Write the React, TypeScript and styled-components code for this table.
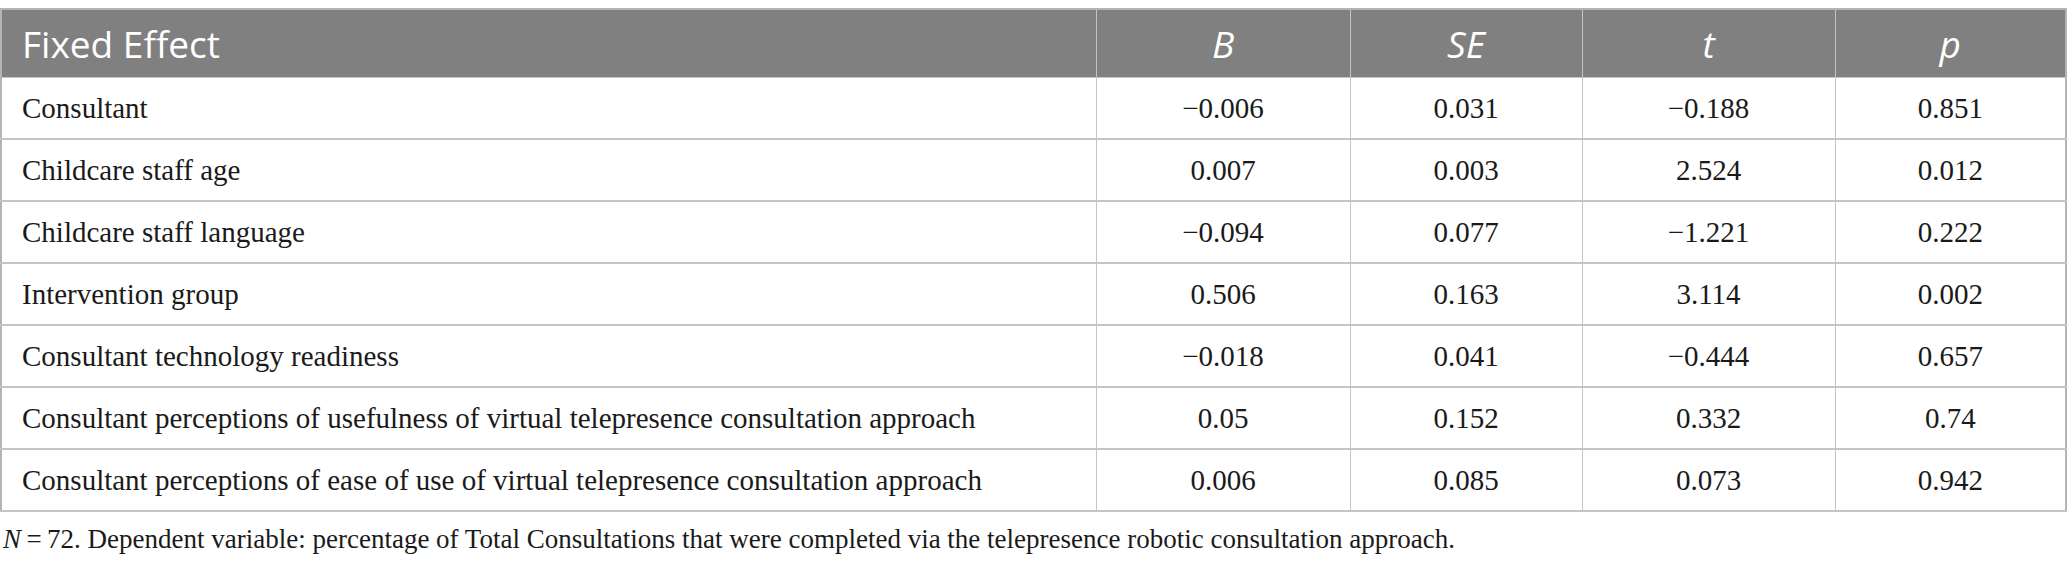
import React from "react";
import styled, { createGlobalStyle } from "styled-components";

const GlobalStyle = createGlobalStyle`
  html, body {
    margin: 0;
    padding: 0;
    background: #ffffff;
  }
`;

type Row = {
  effect: string;
  b: string;
  se: string;
  t: string;
  p: string;
};

const rows: Row[] = [
  { effect: "Consultant", b: "\u22120.006", se: "0.031", t: "\u22120.188", p: "0.851" },
  { effect: "Childcare staff age", b: "0.007", se: "0.003", t: "2.524", p: "0.012" },
  { effect: "Childcare staff language", b: "\u22120.094", se: "0.077", t: "\u22121.221", p: "0.222" },
  { effect: "Intervention group", b: "0.506", se: "0.163", t: "3.114", p: "0.002" },
  { effect: "Consultant technology readiness", b: "\u22120.018", se: "0.041", t: "\u22120.444", p: "0.657" },
  {
    effect: "Consultant perceptions of usefulness of virtual telepresence consultation approach",
    b: "0.05",
    se: "0.152",
    t: "0.332",
    p: "0.74",
  },
  {
    effect: "Consultant perceptions of ease of use of virtual telepresence consultation approach",
    b: "0.006",
    se: "0.085",
    t: "0.073",
    p: "0.942",
  },
];

function App() {
  return (
    <>
      <GlobalStyle />
      <Page>
        <Table>
          <colgroup>
            <col style={{ width: 1095 }} />
            <col style={{ width: 254 }} />
            <col style={{ width: 232 }} />
            <col style={{ width: 253 }} />
            <col />
          </colgroup>
          <thead>
            <tr>
              <HeadCell>Fixed Effect</HeadCell>
              <HeadCell $center $italic>B</HeadCell>
              <HeadCell $center $italic>SE</HeadCell>
              <HeadCell $center $italic>t</HeadCell>
              <HeadCell $center $italic>p</HeadCell>
            </tr>
          </thead>
          <tbody>
            {rows.map((r) => (
              <tr key={r.effect}>
                <Cell>{r.effect}</Cell>
                <Cell $center>{r.b}</Cell>
                <Cell $center>{r.se}</Cell>
                <Cell $center>{r.t}</Cell>
                <Cell $center>{r.p}</Cell>
              </tr>
            ))}
          </tbody>
        </Table>
        <Note>
          <i>N</i>
          {"\u2009=\u200972. Dependent variable: percentage of Total Consultations that were completed via the telepresence robotic consultation approach."}
        </Note>
      </Page>
    </>
  );
}

const Page = styled.div`
  padding-top: 8px;
  width: 2067px;
`;

const Table = styled.table`
  width: 100%;
  border-collapse: collapse;
  table-layout: fixed;
  border: 2px solid #b4b4b4;
`;

const HeadCell = styled.th<{ $center?: boolean; $italic?: boolean }>`
  height: 67px;
  padding: 0 20px;
  background: #7f807f;
  color: #ffffff;
  font-family: "Open Sans", "Noto Sans", sans-serif;
  font-weight: 400;
  font-size: 37px;
  font-style: ${(p) => (p.$italic ? "italic" : "normal")};
  text-align: ${(p) => (p.$center ? "center" : "left")};
  border: 1px solid #c4c4c4;
  border-top: 2px solid #b4b4b4;
  border-bottom: none;
  vertical-align: middle;
`;

const Cell = styled.td<{ $center?: boolean }>`
  height: 60px;
  padding: 0 20px;
  color: #1a1a1a;
  font-family: "Liberation Serif", "Times New Roman", serif;
  font-size: 29px;
  text-align: ${(p) => (p.$center ? "center" : "left")};
  border: 1px solid #c4c4c4;
  border-bottom: 2px solid #c4c4c4;
  vertical-align: middle;
  white-space: nowrap;
`;

const Note = styled.div`
  padding: 12px 0 0 3px;
  color: #1a1a1a;
  font-family: "Liberation Serif", "Times New Roman", serif;
  font-size: 27px;
  white-space: nowrap;
`;

export default App;
